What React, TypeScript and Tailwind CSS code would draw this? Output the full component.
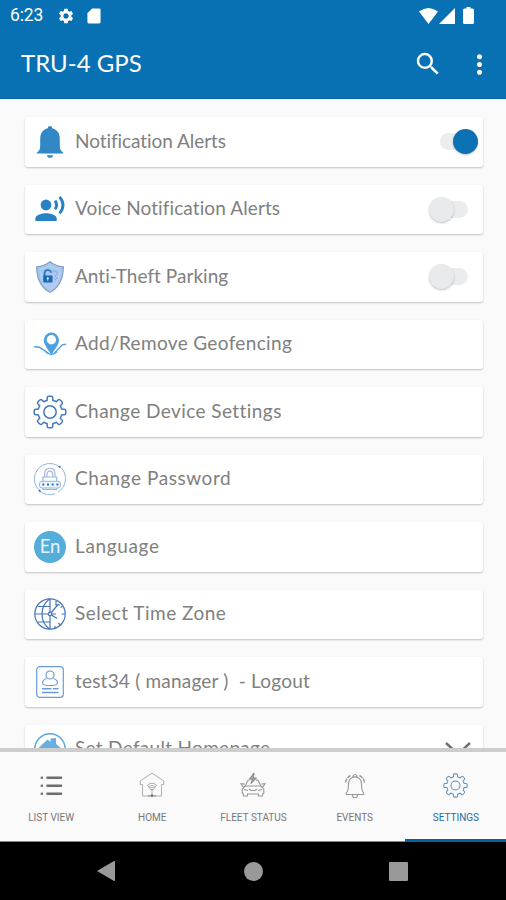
import React from 'react';
import { MdMoreVert, MdSearch, MdSettings } from 'react-icons/md';

interface IconProps {
  className?: string;
}

interface SettingRow {
  label: string;
  tracking: string;
  icon: React.ReactNode;
  toggle?: boolean;
  expandable?: boolean;
}

interface TabItem {
  label: string;
  icon: React.ReactNode;
  active?: boolean;
}

const BellIcon = () => (
  <svg viewBox="0 0 32 32" className="h-8 w-8" fill="#3088c4">
    <path d="M16 0c1.300 0 2 .8 2.200 2.200 5 1.200 7.600 5.200 7.600 10.300v7.500c0 3 .8 4.700 3.400 6.700v.8H2.800v-.8c2.600-2 3.400-3.700 3.400-6.700v-7.500C6.200 7.400 8.800 3.400 13.800 2.200 14 .8 14.700 0 16 0Z" />
    <path d="M12.800 29.200h6.400c-.4 1.700-1.600 2.600-3.200 2.600s-2.800-.9-3.200-2.600Z" />
  </svg>
);

const VoiceIcon = () => (
  <svg viewBox="0 0 32 32" className="h-8 w-8" fill="none">
    <circle cx="12" cy="12" r="5.400" fill="#2583c3" />
    <path d="M1.400 28v-2.500c0-3.800 6.800-5.300 10.600-5.300s10.700 1.500 10.700 5.300V28Z" fill="#2583c3" />
    <path d="M21 7.800q3.300 4.200 0 8.400" stroke="#2583c3" strokeWidth="3" />
    <path d="M25.600 3.800q6.800 8.300 0 16.600" stroke="#2583c3" strokeWidth="2.900" />
  </svg>
);

const ShieldIcon = () => (
  <svg viewBox="0 0 32 32" className="h-8 w-8" fill="none">
    <defs>
      <linearGradient id="shield" x1="0" y1="0" x2="1" y2="1">
        <stop offset="0" stopColor="#95c9ee" />
        <stop offset="1" stopColor="#c2c5f2" />
      </linearGradient>
    </defs>
    <path d="M16 .7c3.500 2.600 7.800 4.600 13.300 5.200-.1 11-3 19.700-13.300 25.400C5.700 25.600 2.800 17 2.700 5.900 8.200 5.300 12.500 3.300 16 .7Z" fill="url(#shield)" stroke="#84a0c4" strokeWidth="1.300" />
    <path d="M16 4.500c3 2 6 3.100 9.800 3.700-.3 9-2.800 15-9.800 19.500C9 23.200 6.500 17.200 6.200 8.200 10 7.600 13 6.500 16 4.500Z" stroke="#acd7f5" strokeWidth="1" />
    <path d="M19 10.500c5-2 5.500 4 1.500 5M21 19l3-3" stroke="#8aa5dc" strokeWidth="1" />
    <path d="M10.500 15v-2.500c0-4.500 6.500-4.500 6.500-.8" stroke="#2870b5" strokeWidth="1.700" />
    <rect x="9.200" y="14.500" width="9.300" height="7" rx=".8" fill="#1769b3" />
    <circle cx="13.800" cy="17.200" r="1" fill="#fff" />
    <path d="M13.800 17.500v2.200" stroke="#fff" strokeWidth=".8" />
  </svg>
);

const GeofenceIcon = () => (
  <svg viewBox="0 0 32 32" className="h-8 w-8 overflow-visible" fill="none" stroke="#4da0e1">
    <path d="M17.400 25C15 20.500 10.800 17 10.800 12.200a6.600 6.600 0 0 1 13.200 0c0 4.800-4.200 8.300-6.600 12.800Z" strokeWidth="2" fill="#4da0e1" />
    <circle cx="17.400" cy="11.800" r="4.700" fill="#fff" stroke="none" />
    <path d="m0 18.700 5.500.6 9.300 6.200M20 25.500l8.300-8.700 3.700-.6" strokeWidth="1.400" />
    <path d="M11.500 23.500q6 6 11.500 0" strokeWidth="1.500" />
  </svg>
);

const GearIcon = ({ className = "" }: IconProps) => (
  <svg viewBox="0 0 34 34" className={className} fill="none" stroke="currentColor" strokeLinejoin="round">
    <path d="M14.200 5.200V2.700q0-1.500 1.500-1.500h2.600q1.500 0 1.500 1.500v2.500l3.500 1.500L25.100 5q1-1 2.100 0L29 6.800q1 1.100 0 2.100l-1.700 1.800 1.500 3.500h2.500q1.500 0 1.500 1.500v2.600q0 1.500-1.500 1.500h-2.500l-1.500 3.500 1.700 1.800q1 1 0 2.100L27.200 29q-1.100 1-2.100 0l-1.800-1.700-3.500 1.500v2.500q0 1.500-1.500 1.500h-2.600q-1.500 0-1.500-1.500v-2.500l-3.500-1.500L8.900 29q-1 1-2.100 0L5 27.200q-1-1.100 0-2.100l1.700-1.800-1.500-3.500H2.700q-1.500 0-1.500-1.500v-2.600q0-1.500 1.500-1.500h2.500l1.500-3.500L5 8.900q-1-1 0-2.100L6.800 5q1.100-1 2.100 0l1.800 1.700Z" />
    <circle cx="17" cy="17" r="6.200" />
  </svg>
);

const PasswordIcon = () => (
  <svg viewBox="0 0 32 32" className="h-8 w-8" fill="none" stroke="#8fb6e4">
    <path d="M27.500 5A16 16 0 0 1 24 29.200M21 30.800A15.500 15.500 0 0 1 6.200 28.500M4 26A15.500 15.500 0 0 1 24 2.800" strokeWidth="1" />
    <path d="m24.500 3.200 2 1.300M4.800 26.800l1.700 2" stroke="#356fb8" strokeWidth="1.600" />
    <path d="M10.700 14v-3.500c0-7 10.300-7 10.300 0V14M13 14v-3c0-3.800 5.700-3.800 5.700 0v3" stroke="#a8b7dd" strokeWidth="1.200" />
    <path d="M9 18v-4h13.700v4M9 25v1.500h13.700V25" strokeWidth="1.200" />
    <rect x="5.500" y="18.300" width="21" height="6.700" rx="2.500" fill="#eef7ff" />
    <path d="M8.300 21.500h2M13 21.500h2M17.700 21.500h2M22.400 21.500h2" stroke="#2870bd" strokeWidth="2" />
  </svg>
);

const TimeZoneIcon = () => (
  <svg viewBox="0 0 32 32" className="h-8 w-8" fill="none" stroke="#4775bb" strokeWidth="1.200">
    <circle cx="16" cy="16" r="15.200" />
    <path d="M16 .8v30.400M.8 16H22M3.500 8.500H16M3.500 24H16M16 .8C11 4 8 10 8 16s3 12 8 15.200" />
    <path d="m16 16 8.500-10M16 16l7 4.500M22 3v4h4M27.500 16H31M24.500 25l2.200 2.400M21 28v2.500M26.500 9.500l2-1.200" />
    <circle cx="16" cy="16" r="1.700" fill="#fff" />
  </svg>
);

const ProfileIcon = () => (
  <svg viewBox="0 0 32 32" className="h-8 w-8" fill="none" stroke="#6b9cd8" strokeWidth="1.200">
    <rect x="2.700" y=".7" width="26.600" height="30.600" rx="3" />
    <circle cx="16" cy="9" r="4" />
    <path d="M12.500 12.500c-3 1-4.700 3.200-3.500 5.500 1.500 2 12.500 2 14 0 1.200-2.300-.5-4.500-3.500-5.500" />
    <path d="M8 22.800h9.500M19 22.800h5.500M8 26.500h16.500" strokeWidth="1.500" />
  </svg>
);

const HomepageIcon = () => (
  <svg viewBox="0 0 32 32" className="h-8 w-8" fill="none">
    <circle cx="16" cy="16" r="15.200" stroke="#58a6dc" strokeWidth="1.500" />
    <path d="m4.500 15 9-8.500 3 2.500V5.500l5.500-.5v6l5.500 4.500H25V25H7V15Z" fill="#6aaee0" />
  </svg>
);

const LanguageIcon = () => (
  <div className="flex h-8 w-8 items-center justify-center rounded-full bg-[#55add9] text-[18.500px] text-[#e3f5ff]">
    En
  </div>
);

const ListTabIcon = () => (
  <svg viewBox="0 0 24 24" className="h-6 w-6" fill="none" stroke="#6d6d6d" strokeLinecap="round" strokeWidth="2.500">
    <path d="M8.500 4.700H22M8.500 12.700H22M8.500 20.700H22M2.800 4.700h.1M2.800 12.700h.1M2.800 20.700h.1" />
  </svg>
);

const HomeTabIcon = () => (
  <svg viewBox="0 0 26 26" className="h-[26px] w-[26px]" fill="none" stroke="#b0b0b0" strokeWidth="1">
    <path d="M3.500 24V12.500H1.200V9L13 1.200 24.800 9v3.500h-2.300V24h-6.500M3.500 24H10" />
    <path d="M8.500 13q4.500-3.500 9 0l-3 4.500h-3ZM10 14.500q3-2 6 0M11 16q2-1 4 0M13 17v5" />
    <path d="M9 24h2.500M14.500 24H17" stroke="#777" />
    <circle cx="13" cy="23.700" r="1.100" fill="#777" stroke="#777" />
  </svg>
);

const FleetTabIcon = () => (
  <svg viewBox="0 0 26 26" className="h-[26px] w-[26px]" fill="none" stroke="#999" strokeWidth="1.100">
    <path d="m5.200 14 2.300-5q.5-1 1.500-1h1M16 8h1q1 0 1.500 1l2.300 5M3.500 22v2h4v-2h11v2h4v-2l1.300-1v-4l-3-3H5.200l-3 3v4ZM4.700 12 1 11.700l1.500 2.500 2 .2M21.300 12l3.700-.3-1.500 2.500-2 .2M9 17l2 1.500h4l2-1.500M4 17.500l4 1M22 17.500l-4 1" />
    <path d="m14 1-4.500 6h3l-1.500 4.500L16.500 6h-3Z" fill="#aaa" stroke="#777" strokeWidth=".9" />
  </svg>
);

const EventsTabIcon = () => (
  <svg viewBox="0 0 24 26" className="h-[26px] w-6" fill="none" stroke="#999" strokeWidth="1.100">
    <path d="M3.200 22.500v-1.300c2.300-2.200 2.300-5 2.300-9.200 0-9.500 13-9.500 13 0 0 4.200 0 7 2.300 9.200v1.300ZM9.800 4.700q.5-2.200 2.200-2.200t2.200 2.200M9.500 22.800q0 3.200 2.500 3.200t2.500-3.200" />
    <path d="M2.500 10.500q.7-4.500 5-7M21.500 10.500q-.7-4.500-5-7" strokeWidth="1.500" strokeDasharray="4 1" />
  </svg>
);

const rows: SettingRow[] = [
  { label: "Notification Alerts", tracking: "tracking-[-0.06px]", icon: <BellIcon />, toggle: true },
  { label: "Voice Notification Alerts", tracking: "tracking-[0.1px]", icon: <VoiceIcon />, toggle: false },
  { label: "Anti-Theft Parking", tracking: "tracking-[0.03px]", icon: <ShieldIcon />, toggle: false },
  { label: "Add/Remove Geofencing", tracking: "tracking-[0.35px]", icon: <GeofenceIcon /> },
  { label: "Change Device Settings", tracking: "tracking-[0.43px]", icon: <GearIcon className="h-[34px] w-[34px] stroke-[1.5] text-[#4479be]" /> },
  { label: "Change Password", tracking: "tracking-[0.57px]", icon: <PasswordIcon /> },
  { label: "Language", tracking: "tracking-[0.65px]", icon: <LanguageIcon /> },
  { label: "Select Time Zone", tracking: "tracking-[0.48px]", icon: <TimeZoneIcon /> },
  { label: "test34 ( manager )  - Logout", tracking: "tracking-[0.2px]", icon: <ProfileIcon /> },
  { label: "Set Default Homepage", tracking: "tracking-[0.3px]", icon: <HomepageIcon />, expandable: true },
];

const tabs: TabItem[] = [
  { label: "LIST VIEW", icon: <ListTabIcon /> },
  { label: "HOME", icon: <HomeTabIcon /> },
  { label: "FLEET STATUS", icon: <FleetTabIcon /> },
  { label: "EVENTS", icon: <EventsTabIcon /> },
  { label: "SETTINGS", icon: <GearIcon className="h-[25px] w-[25px] stroke-[1.4] text-[#5b92c4]" />, active: true },
];

const Toggle = ({ on }: { on: boolean }) => (
  <div className={`flex h-[25px] items-center ${on ? "-mr-[10px] justify-end" : ""}`}>
    <div className={`h-[25px] w-[25px] shrink-0 rounded-full ${on ? "order-2 z-10 bg-[#0b71b2] shadow-[0_1px_2px_rgba(0,0,0,0.25)]" : "z-10 bg-[#e8eaeb] shadow-[0_1px_2px_rgba(0,0,0,0.25)]"}`} />
    <div className={`h-[17px] bg-[#ebeced] ${on ? "-mr-2 w-[21px] rounded-l-full" : "-ml-2 w-[22px] rounded-r-full"}`} />
  </div>
);

export default function App() {
  return (
    <div className="flex h-[900px] w-[506px] flex-col overflow-hidden bg-[#fafafa] font-['Lato',sans-serif]">
      {/* Header */}
      <header className="h-[99px] shrink-0 border-b border-[#0560a3] bg-[#0871b3] text-white">
        <div className="flex h-[31px] items-center pl-[10px] pr-[32px]">
          <span className="w-[47px] font-['Roboto',sans-serif] text-[17.500px] leading-none tracking-[-0.1px]">6:23</span>
          <MdSettings className="h-[18px] w-[18px]" />
          <svg viewBox="0 0 14 17" className="ml-3 h-[16px] w-[14px]" fill="currentColor">
            <path d="M5 .5h7.500q1.500 0 1.500 1.500v13q0 1.500-1.500 1.500h-11Q0 16.500 0 15V5.500Z" />
          </svg>
          <div className="ml-auto flex items-center">
            <svg viewBox="0 0 19 16" className="h-4 w-[19px]" fill="currentColor">
              <path d="M0 3.500q9.500-7 19 0L9.500 16Z" />
            </svg>
            <svg viewBox="0 0 16 16" className="ml-[1px] h-4 w-4" fill="currentColor">
              <path d="M16 0v16H0Z" />
            </svg>
            <svg viewBox="0 0 11 17" className="ml-[8px] h-[17px] w-[11px]" fill="currentColor">
              <path d="M3.500 0h4v1.500h2q1.500 0 1.500 1.500v12.500q0 1.500-1.500 1.500h-8Q0 17 0 15.500V3q0-1.500 1.500-1.500h2Z" />
            </svg>
          </div>
        </div>
        <div className="flex h-[66px] items-center pl-[21px] pr-[11px]">
          <h1 className="pb-0.5 text-2xl leading-8">TRU-4 GPS</h1>
          <MdSearch className="ml-auto h-[30px] w-[30px]" />
          <MdMoreVert className="ml-[21px] h-[31px] w-[31px]" />
        </div>
      </header>

      {/* Settings list */}
      <main className="flex min-h-0 flex-1 flex-col gap-[18px] overflow-hidden pl-[25px] pr-[23px] pt-[18px]">
        {rows.map((row) => (
          <div key={row.label} className="flex h-[49.500px] shrink-0 items-center rounded-[3px] bg-white pr-[15px] shadow-[0_1px_2px_rgba(0,0,0,0.23)]">
            <div className="flex w-[50px] shrink-0 items-center justify-center">{row.icon}</div>
            <span className={`whitespace-pre pb-[2px] text-[19px] leading-6 text-[#808080] ${row.tracking}`}>{row.label}</span>
            <div className="ml-auto">
              {row.toggle !== undefined && <Toggle on={row.toggle} />}
              {row.expandable && (
                <svg viewBox="0 0 26 16" className="-mr-[3px] h-4 w-[26px]" fill="none" stroke="#707070" strokeWidth="2.500">
                  <path d="m1 2 12 11L25 2" />
                </svg>
              )}
            </div>
          </div>
        ))}
      </main>

      {/* Bottom tabs */}
      <nav className="grid h-[94px] shrink-0 grid-cols-5 border-t-4 border-[#cdcdcd] bg-[#fafafa]">
        {tabs.map((tab) => (
          <div key={tab.label} className={`flex flex-col items-center pl-px pt-5 ${tab.active ? "border-b-[3px] border-[#07629f] text-[#1b6cac]" : "border-b border-[#888] text-[#777]"}`}>
            <div className="flex h-[26px] items-center">{tab.icon}</div>
            <span className="mt-[14px] whitespace-nowrap font-['Roboto',sans-serif] text-[10px] leading-3">{tab.label}</span>
          </div>
        ))}
      </nav>

      {/* System navigation */}
      <footer className="flex h-[58px] shrink-0 items-center bg-black pl-[97px]">
        <svg viewBox="0 0 18 22" className="h-[22px] w-[18px]" fill="#999">
          <path d="m0 11 17-10q1-.5 1 1v18q0 1.500-1 1Z" />
        </svg>
        <div className="ml-[129px] h-[19px] w-[19px] rounded-full bg-[#999]" />
        <div className="ml-[126px] h-[19px] w-[19px] rounded-[1px] bg-[#999]" />
      </footer>
    </div>
  );
}
